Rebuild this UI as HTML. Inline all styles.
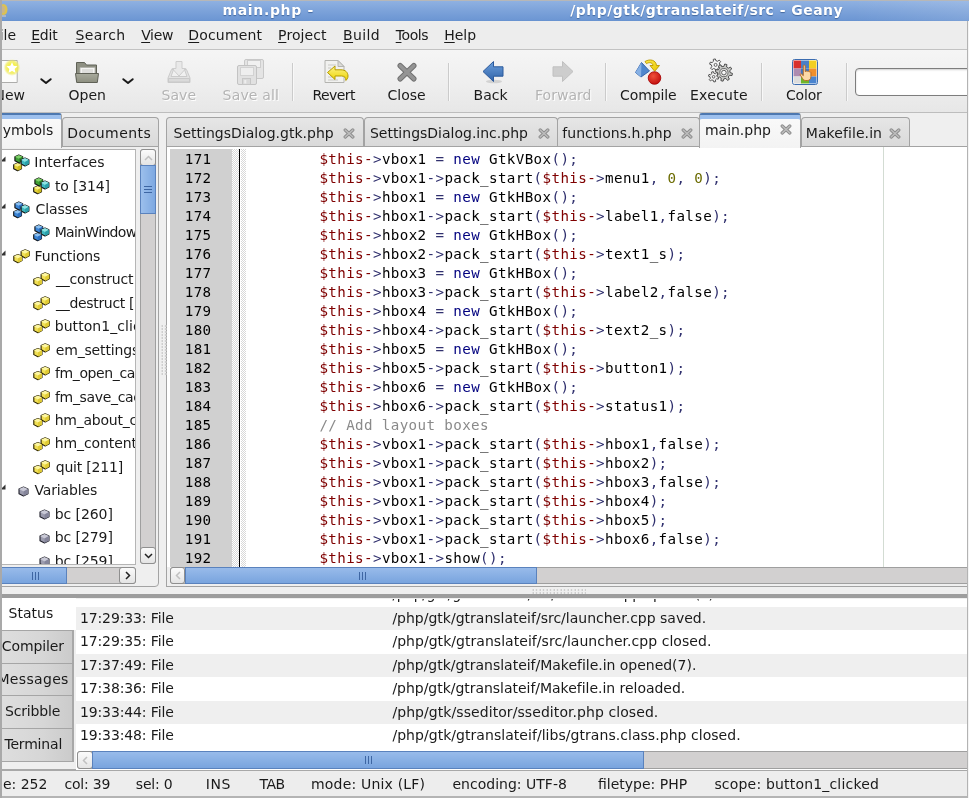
<!DOCTYPE html>
<html><head><meta charset="utf-8"><title>main.php - Geany</title>
<style>
html,body{margin:0;padding:0}
body>*{will-change:transform}
body{width:969px;height:798px;overflow:hidden;position:relative;background:#efefef;font-family:"DejaVu Sans","Liberation Sans",sans-serif;font-size:14px;color:#1a1a1a}
.abs{position:absolute}
div,span{box-sizing:border-box}
#title{left:0;top:0;width:969px;height:21.500px;background:linear-gradient(90deg,rgba(255,255,255,0) 88%,rgba(255,255,255,.12)),linear-gradient(#8fb1e1,#7da3da 45%,#6c96d3 92%,#4f7bba);color:#fff;font-weight:bold;font-size:14px;line-height:20px;white-space:nowrap;border-top:1.500px solid #b7b7b7;text-shadow:0 1px 1px #44699f}
#title span{position:absolute;top:-1.500px}
#menu{left:0;top:21px;width:969px;height:28px;background:#ededed;line-height:28px;white-space:nowrap}
#menu span{position:absolute;top:0}
#menu u{text-decoration:underline;text-underline-offset:2px}
#tb{left:0;top:49px;width:969px;height:64px;background:linear-gradient(#f5f5f5,#efefef 50%,#e7e7e7);border-top:1px solid #c2c2c2;border-bottom:1px solid #bdbdbd}
.tl{position:absolute;left:0;top:35.5px;line-height:18px;white-space:nowrap}
.tl span{position:absolute;top:0}
.dis{color:#b4b4b4;text-shadow:1px 1px 0 #fff}
.sep{position:absolute;top:13px;width:2px;height:38px;border-left:1px solid #cbcbcb;border-right:1px solid #f8f8f8}
.ic{position:absolute}
#entry{left:855px;top:18px;width:130px;height:28px;background:#fff;border:1.500px solid #7d7d7d;border-radius:4px;box-shadow:inset 0 1px 2px #d0d0d0}
.tab{position:absolute;top:117px;height:30px;background:linear-gradient(#e6e6e6,#d9d9d9);border:1px solid #a3a3a3;border-bottom:none;border-radius:4px 4px 0 0;white-space:nowrap;line-height:30px}
.tab.act{top:112.500px;height:34.500px;background:linear-gradient(#fafafa,#f3f3f3);border-top:2px solid #4d78b0;box-shadow:inset 0 4px 0 #9dc0ee;line-height:26px;z-index:3;border-radius:3px 3px 0 0}
.tab.act span{top:1.500px}
.tab span{position:absolute;top:0}
.cx{position:absolute;width:12px;height:11px}
#side{left:-3px;top:146px;width:162px;height:441px;border:1px solid #a3a3a3;border-radius:0 0 4px 0;background:#efefef}
#tree{left:2px;top:148.500px;width:134px;height:415.500px;background:#fff;overflow:hidden;border-right:1px solid #b5b5b5;border-bottom:1px solid #b5b5b5;border-top:1px solid #b0b0b0}
.tr{position:absolute;left:0;height:23.500px;line-height:23.500px;white-space:nowrap}
.tr svg,.tr span{position:absolute}
.tr span{top:0}
#ed{left:166px;top:146px;width:820px;height:441px;border:1px solid #a3a3a3;background:#efefef}
#edw{left:167px;top:147px;width:802px;height:420px;background:#fff;overflow:hidden}
#lnm{left:3px;top:2px;width:62px;height:420px;background:#d0d0d0}
#code,#lns{font-family:"DejaVu Sans Mono","Liberation Mono",monospace;font-size:14.200px;letter-spacing:.381px;line-height:19px;white-space:pre;position:absolute;top:2.700px;color:#000}
#lns{left:3px;width:41.500px;text-align:right;color:#000}
#code{left:81px}
.v{color:#7f0000}.o{color:#30306e}.k{color:#00007f}.n{color:#6b6b00}.c{color:#8a8a8a}
.fold{position:absolute;top:2px;height:420px;background-image:conic-gradient(#fff 25%,#d8d8d8 0 50%,#fff 0 75%,#d8d8d8 0);background-size:2px 2px}
.sb{position:absolute;background:#d2d0d0;border:1px solid #9f9f9f}
.thumb{position:absolute;background:linear-gradient(#98bbea,#79a4de);border:1px solid #5a82bd}
.thumbv{position:absolute;background:linear-gradient(90deg,#9cbfec,#7da8e1);border:1px solid #5a82bd}
.btn{position:absolute;background:linear-gradient(#fbfbfb,#e4e4e4);border:1px solid #8f8f8f;border-radius:3px}
#bot{left:-3px;top:594.300px;width:990px;height:176.700px;border-top:4px solid #9d9d9d;border-bottom:2px solid #a8a8a8;background:#efefef}
.bst{line-height:30px;white-space:nowrap}
.bst span{position:absolute;top:0}
.btab{position:absolute;left:0;width:74px;height:33.500px;background:linear-gradient(90deg,#dedede,#d6d6d6 60%,#cbcbcb);border:1px solid #a5a5a5;border-right:2px solid #a8a8a8;border-left:none;line-height:31px;white-space:nowrap}
.btab span{position:absolute;top:0}
.row{position:absolute;left:76px;width:893px;height:23.500px;line-height:23.500px;white-space:nowrap}
.row span{position:absolute;top:0}
.g{background:#efefef}
#stat{left:0;top:771px;width:969px;height:27px;background:#ededed;border-bottom:2px solid #b4b4b4;line-height:24px;white-space:nowrap}
#stat span{position:absolute;top:1px}
.grip{background-image:radial-gradient(circle at 1px 1px,#c4c4c4 .6px,rgba(255,255,255,.9) .9px,rgba(255,255,255,0) 1.500px);background-size:3.500px 3px}
</style></head><body>
<div id="title" class="abs"><svg class="abs" style="left:0;top:1px" width="10" height="16" viewBox="0 0 10 16"><ellipse cx="3.5" cy="7.5" rx="4" ry="5.5" fill="#dcc253"/><ellipse cx="2.8" cy="7.5" rx="2" ry="3.5" fill="#c9b58a"/><path d="M1 13h5v2h-5z" fill="#a9b7cc"/></svg><span style="left:222.50px;letter-spacing:0.655px">main.php -</span><span style="left:570.30px;letter-spacing:0.454px">/php/gtk/gtranslateif/src - Geany</span></div>
<div id="menu" class="abs"><span style="left:-7.41px"><u>F</u>ile</span><span style="left:31.20px;letter-spacing:-0.207px"><u>E</u>dit</span><span style="left:75.50px;letter-spacing:0.315px"><u>S</u>earch</span><span style="left:141.20px;letter-spacing:-0.357px"><u>V</u>iew</span><span style="left:188.20px;letter-spacing:0.194px"><u>D</u>ocument</span><span style="left:278.10px;letter-spacing:0.082px"><u>P</u>roject</span><span style="left:343.10px;letter-spacing:0.361px"><u>B</u>uild</span><span style="left:395.70px;letter-spacing:-0.398px"><u>T</u>ools</span><span style="left:444.20px;letter-spacing:-0.010px"><u>H</u>elp</span></div>
<div id="tb" class="abs">
<svg class="ic" style="left:-6px;top:5px" width="30" height="30" viewBox="0 0 30 30">
<defs><radialGradient id="gl"><stop offset="0.35" stop-color="#f4ef3a"/><stop offset="0.75" stop-color="#f1ec5a" stop-opacity=".75"/><stop offset="1" stop-color="#f4f080" stop-opacity="0"/></radialGradient></defs>
<path d="M3.5 5.5h19.700v22h-19.700z" fill="#fcfcfb" stroke="#adadab"/>
<circle cx="18" cy="12.5" r="8.5" fill="url(#gl)"/>
<path d="M18 7.2l1.7 3.5 3.8.5-2.8 2.7.7 3.8-3.4-1.8-3.4 1.8.7-3.8-2.8-2.7 3.8-.5z" fill="#fff"/>
</svg>
<svg class="ic" style="left:38.5px;top:25.599999999999994px" width="14" height="10" viewBox="0 0 14 10"><path d="M2.3 3.200l4.7 3.8 4.7-3.8" fill="none" stroke="#1a1a1a" stroke-width="2" stroke-linecap="round" stroke-linejoin="round"/></svg>
<svg class="ic" style="left:120.5px;top:25.599999999999994px" width="14" height="10" viewBox="0 0 14 10"><path d="M2.3 3.200l4.7 3.8 4.7-3.8" fill="none" stroke="#1a1a1a" stroke-width="2" stroke-linecap="round" stroke-linejoin="round"/></svg>
<svg class="ic" style="left:74px;top:9px" width="26" height="26" viewBox="0 0 26 26">
<defs><linearGradient id="fo" x1="0" y1="0" x2="0" y2="1"><stop offset="0" stop-color="#a9ab9d"/><stop offset="1" stop-color="#8d8f80"/></linearGradient></defs>
<path d="M2.5 3.5h8l2 2.5h10v15h-20z" fill="#8e9083" stroke="#5f6156" stroke-width="1"/>
<path d="M6 8.5h15v9h-15z" fill="#f4f4f2" stroke="#b0b0aa" stroke-width=".8"/>
<path d="M8 11h11M8 13h11M8 15h8" stroke="#c4c4c0" stroke-width=".9"/>
<path d="M1.5 14.5h23l-1.2 9h-20.6z" fill="url(#fo)" stroke="#5f6156" stroke-width="1" stroke-linejoin="round"/>
</svg>
<svg class="ic" style="left:166px;top:9px" width="26" height="26" viewBox="0 0 26 26">
<path d="M10 2.5h6v7h3.8l-6.8 7.5-6.8-7.500h3.8z" fill="#e9e9e9" stroke="#cdcdcd" stroke-linejoin="round"/>
<path d="M5.5 10.500l-3.5 8.500v4.500h22v-4.500l-3.5-8.500h-2l2.5 7h-16l2.5-7z" fill="#e3e3e3" stroke="#cbcbcb" stroke-linejoin="round"/>
<path d="M2.5 19.500h21v3.500h-21z" fill="#dadada" stroke="#c9c9c9"/>
</svg>
<svg class="ic" style="left:236px;top:7px" width="30" height="30" viewBox="0 0 30 30">
<g fill="#e4e4e4" stroke="#c8c8c8"><rect x="8.5" y="2.5" width="19" height="19" rx="1.5"/><rect x="11.5" y="3.5" width="13" height="7" fill="#f0f0f0" stroke="#cdcdcd"/></g>
<g fill="#e1e1e1" stroke="#c3c3c3"><rect x="1.5" y="8.5" width="19" height="19" rx="1.5"/><rect x="4.5" y="10.5" width="13" height="8" fill="#eeeeee" stroke="#d2d2d2"/><rect x="6.5" y="21.5" width="8" height="6" fill="#d9d9d9" stroke="#c6c6c6"/><rect x="8.3" y="23" width="2" height="3.5" fill="#eee" stroke="none"/></g>
</svg>
<svg class="ic" style="left:322px;top:8px" width="28" height="28" viewBox="0 0 28 28">
<defs><linearGradient id="ya" x1="0" y1="0" x2="0" y2="1"><stop offset="0" stop-color="#fdf38a"/><stop offset="1" stop-color="#edd400"/></linearGradient></defs>
<path d="M3 2.500h13l6 6v16h-19z" fill="#f1f1ef" stroke="#b4b4b0" stroke-linejoin="round"/>
<path d="M16 2.500v6h6z" fill="#dcdcd8" stroke="#b4b4b0" stroke-linejoin="round"/>
<path d="M6 7h8M6 10h3M6 19h5M6 22h10" stroke="#c9c9c5" stroke-width="1"/>
<path d="M5.5 14.500l7.5-6.500v3.800h6c4.5 0 7 2.7 7 6.2 0 2.2-1 3.6-2.2 4.5.3-2.8-1.3-4.5-4.3-4.500h-6.500v3.500z" fill="url(#ya)" stroke="#b59b00" stroke-width="1" stroke-linejoin="round"/>
</svg>
<svg class="ic" style="left:395px;top:11px" width="24" height="22" viewBox="0 0 24 22">
<path d="M5.2 4.700l13.6 13.100M18.8 4.700l-13.6 13.1" stroke="#6f6f6f" stroke-width="5.4" stroke-linecap="round"/>
<path d="M5.2 4.700l13.6 13.100M18.8 4.700l-13.6 13.1" stroke="#949494" stroke-width="3.6" stroke-linecap="round"/>
</svg>
<svg class="ic" style="left:481px;top:9px" width="24" height="26" viewBox="0 0 24 26">
<defs><linearGradient id="ba" x1="0" y1="0" x2="0" y2="1"><stop offset="0" stop-color="#6da0dc"/><stop offset="1" stop-color="#2f62a8"/></linearGradient></defs>
<ellipse cx="13" cy="22.5" rx="8" ry="1.8" fill="#000" opacity=".12"/>
<path d="M2 12.500l10.5-10v5.300h9.500v9.400h-9.500v5.300z" fill="url(#ba)" stroke="#2c5a9c" stroke-width="1" stroke-linejoin="round"/>
</svg>
<svg class="ic" style="left:551px;top:9px" width="24" height="26" viewBox="0 0 24 26">
<path d="M22 12.500l-10.5-10v5.300h-9.500v9.400h9.500v5.300z" fill="#cdcdcd" stroke="#c0c0c0" stroke-width="1" stroke-linejoin="round"/>
</svg>
<svg class="ic" style="left:633px;top:7px" width="30" height="30" viewBox="0 0 30 30">
<defs><radialGradient id="rb" cx=".4" cy=".35" r=".7"><stop offset="0" stop-color="#f0503a"/><stop offset="1" stop-color="#c00d0d"/></radialGradient>
<linearGradient id="yb" x1="0" y1="0" x2="1" y2="1"><stop offset="0" stop-color="#fce94f"/><stop offset="1" stop-color="#e9c800"/></linearGradient></defs>
<path d="M8.5 5.500l-6 10 5.5 4.5 8.5-6z" fill="#4f86cc" stroke="#2d5ea6" stroke-width=".9" stroke-linejoin="round"/>
<path d="M8.5 5.500l-.5 14.5-5.5-4.500z" fill="#86b0e4"/>
<path d="M12 4.500c5-3 11-1.5 11.5 4h3l-4.8 5.8-4.7-5.800h3c-.3-3-4-3.6-6.5-1.800z" fill="url(#yb)" stroke="#b99600" stroke-width=".9" stroke-linejoin="round"/>
<circle cx="21.5" cy="21" r="6.3" fill="url(#rb)" stroke="#a40000" stroke-width=".8"/>
</svg>
<svg class="ic" style="left:707px;top:8px" width="28" height="28" viewBox="0 0 28 28"><path d="M12.80 6.90L14.55 7.65L13.95 9.62L12.07 9.26L10.70 10.54L10.93 12.43L8.91 12.89L8.29 11.09L6.50 10.54L4.97 11.68L3.57 10.17L4.82 8.73L4.40 6.90L2.65 6.15L3.25 4.18L5.13 4.54L6.50 3.26L6.27 1.37L8.29 0.91L8.91 2.71L10.70 3.26L12.23 2.12L13.63 3.63L12.38 5.07Z" fill="#f4f4f4" stroke="#555" stroke-width="1" stroke-linejoin="round"/><circle cx="8.6" cy="6.9" r="1.5" fill="#f7f7f7" stroke="#555" stroke-width=".9"/><path d="M23.10 14.60L25.46 15.41L24.97 17.58L22.49 17.28L21.28 18.98L22.38 21.23L20.50 22.41L18.95 20.45L16.90 20.80L16.09 23.16L13.92 22.67L14.22 20.19L12.52 18.98L10.27 20.08L9.09 18.20L11.05 16.65L10.70 14.60L8.34 13.79L8.83 11.62L11.31 11.92L12.52 10.22L11.42 7.97L13.30 6.79L14.85 8.75L16.90 8.40L17.71 6.04L19.88 6.53L19.58 9.01L21.28 10.22L23.53 9.12L24.71 11.00L22.75 12.55Z" fill="#c9cac7" stroke="#4e4e4e" stroke-width="1" stroke-linejoin="round"/><circle cx="16.9" cy="14.6" r="4.1" fill="#e8e8e6" stroke="#4e4e4e" stroke-width=".8"/><circle cx="16.9" cy="14.6" r="2.3" fill="#f7f7f7" stroke="#4e4e4e" stroke-width=".9"/><path d="M10.20 18.80L11.76 19.45L11.23 21.16L9.58 20.82L8.40 21.92L8.62 23.59L6.87 23.99L6.34 22.39L4.80 21.92L3.46 22.94L2.24 21.63L3.36 20.37L3.00 18.80L1.44 18.15L1.97 16.44L3.62 16.78L4.80 15.68L4.58 14.01L6.33 13.61L6.86 15.21L8.40 15.68L9.74 14.66L10.96 15.97L9.84 17.23Z" fill="#f0f0f0" stroke="#555" stroke-width="1" stroke-linejoin="round"/><circle cx="6.6" cy="18.8" r="1.3" fill="#f7f7f7" stroke="#555" stroke-width=".9"/></svg>
<svg class="ic" style="left:792px;top:9px" width="26" height="26" viewBox="0 0 26 26">
<rect x=".5" y=".5" width="25" height="25" rx="2" fill="#fff" stroke="#3b6cb0"/>
<rect x="1.5" y="1.5" width="7.5" height="8" fill="#d9302c"/><rect x="9" y="1.5" width="8" height="8" fill="#4a7fc6"/><rect x="17" y="1.5" width="7.5" height="8" fill="#f2cf21"/>
<rect x="1.5" y="9.5" width="7.5" height="8" fill="#ad8bb0"/><rect x="9" y="9.5" width="8" height="8" fill="#3f77c0"/><rect x="17" y="9.5" width="7.5" height="8" fill="#f08f2b"/>
<rect x="1.5" y="17.5" width="7.5" height="7" fill="#dcdcdc"/><rect x="9" y="17.5" width="8" height="7" fill="#6fb52c"/><rect x="17" y="17.5" width="7.5" height="7" fill="#4a84cf"/>
<path d="M11.3 6.800c0-1 1.9-1 1.9 0v5.700l1-.2c.6-.5 1.3-.3 1.6.2.6-.4 1.3-.2 1.6.4.8-.3 1.5.2 1.5 1v3.600c0 2.6-1.3 4-3.6 4h-1.600c-1.5 0-2.2-.6-3-1.800l-2.4-3.600c-.5-.9.5-1.7 1.3-1l1.7 1.600z" fill="#fbd9a6" stroke="#b5651d" stroke-width=".9" stroke-linejoin="round"/>
</svg>
<div class="tl"><span style="left:-5.59px">New</span></div><div class="tl"><span style="left:68.50px;letter-spacing:-0.007px">Open</span></div><div class="tl dis"><span style="left:161.50px;letter-spacing:0.050px">Save</span></div><div class="tl dis"><span style="left:222.60px;letter-spacing:0.160px">Save all</span></div><div class="tl"><span style="left:312.50px;letter-spacing:-0.573px">Revert</span></div><div class="tl"><span style="left:387.50px;letter-spacing:-0.006px">Close</span></div><div class="tl"><span style="left:473.50px;letter-spacing:0.073px">Back</span></div><div class="tl dis"><span style="left:535.00px;letter-spacing:0.031px">Forward</span></div><div class="tl"><span style="left:620.00px;letter-spacing:-0.107px">Compile</span></div><div class="tl"><span style="left:690.00px;letter-spacing:0.271px">Execute</span></div><div class="tl"><span style="left:786.00px;letter-spacing:-0.199px">Color</span></div><div class="sep" style="left:291.5px"></div><div class="sep" style="left:448px"></div><div class="sep" style="left:605px"></div><div class="sep" style="left:761px"></div><div class="sep" style="left:846px"></div><div id="entry" class="abs"></div>
</div>
<div class="tab act" style="left:-6px;width:68px"><span style="left:-1.15px">Symbols</span></div><div class="tab" style="left:61.5px;width:96.5px"><span style="left:4.30px;letter-spacing:0.459px">Documents</span></div>
<div class="tab" style="left:166px;width:198px"><span style="left:6.60px">SettingsDialog.gtk.php</span><svg class="cx" style="left:176px;top:9.5px" viewBox="0 0 12 11"><path d="M2.2 2l7.6 7M9.8 2l-7.6 7" stroke="#8c8c8c" stroke-width="3.3" stroke-linecap="round"/><path d="M2.2 2l7.6 7M9.8 2l-7.6 7" stroke="#bdbdbd" stroke-width="1.5" stroke-linecap="round"/></svg></div><div class="tab" style="left:363.5px;width:193.5px"><span style="left:4.90px">SettingsDialog.inc.php</span><svg class="cx" style="left:172.5px;top:9.5px" viewBox="0 0 12 11"><path d="M2.2 2l7.6 7M9.8 2l-7.6 7" stroke="#8c8c8c" stroke-width="3.3" stroke-linecap="round"/><path d="M2.2 2l7.6 7M9.8 2l-7.6 7" stroke="#bdbdbd" stroke-width="1.5" stroke-linecap="round"/></svg></div><div class="tab" style="left:556.5px;width:143px"><span style="left:4.30px;letter-spacing:0.027px">functions.h.php</span><svg class="cx" style="left:122.5px;top:9.5px" viewBox="0 0 12 11"><path d="M2.2 2l7.6 7M9.8 2l-7.6 7" stroke="#8c8c8c" stroke-width="3.3" stroke-linecap="round"/><path d="M2.2 2l7.6 7M9.8 2l-7.6 7" stroke="#bdbdbd" stroke-width="1.5" stroke-linecap="round"/></svg></div><div class="tab act" style="left:699px;width:102px"><span style="left:5.00px;letter-spacing:-0.027px">main.php</span><svg class="cx" style="left:80px;top:9px" viewBox="0 0 12 11"><path d="M2.2 2l7.6 7M9.8 2l-7.6 7" stroke="#8c8c8c" stroke-width="3.3" stroke-linecap="round"/><path d="M2.2 2l7.6 7M9.8 2l-7.6 7" stroke="#bdbdbd" stroke-width="1.5" stroke-linecap="round"/></svg></div><div class="tab" style="left:800.5px;width:108.5px"><span style="left:3.80px;letter-spacing:0.076px">Makefile.in</span><svg class="cx" style="left:87.0px;top:9.5px" viewBox="0 0 12 11"><path d="M2.2 2l7.6 7M9.8 2l-7.6 7" stroke="#8c8c8c" stroke-width="3.3" stroke-linecap="round"/><path d="M2.2 2l7.6 7M9.8 2l-7.6 7" stroke="#bdbdbd" stroke-width="1.5" stroke-linecap="round"/></svg></div>
<div id="side" class="abs"></div>
<div id="tree" class="abs">
<div class="tr" style="top:1.10px"><svg style="left:-2.500px;top:5px" width="6" height="6" viewBox="0 0 6 6"><path d="M5.5 .5v5h-5z" fill="#333"/></svg><svg style="left:10.7px;top:2.800px" width="17" height="18" viewBox="0 0 17 18"><path d="M5.80 0.90L9.70 2.65L9.70 6.73L5.80 8.70L1.90 6.73L1.90 2.65Z" fill="#3f9f35" stroke="#111" stroke-width="1.1" stroke-linejoin="round"/><path d="M5.80 0.90L9.70 2.65L5.80 4.80L1.90 2.65Z" fill="#7fd06a"/><path d="M5.80 4.80L9.70 2.65L9.70 6.73L5.80 8.70Z" fill="#2f8a2a"/><path d="M12.00 4.10L15.90 5.86L15.90 9.93L12.00 11.90L8.10 9.93L8.10 5.86Z" fill="#3fb8c0" stroke="#111" stroke-width="1.1" stroke-linejoin="round"/><path d="M12.00 4.10L15.90 5.86L12.00 8.00L8.10 5.86Z" fill="#8fe3e3"/><path d="M12.00 8.00L15.90 5.86L15.90 9.93L12.00 11.90Z" fill="#2aa0aa"/><path d="M4.60 8.90L8.50 10.66L8.50 14.73L4.60 16.70L0.70 14.73L0.70 10.66Z" fill="#e3d23a" stroke="#111" stroke-width="1.1" stroke-linejoin="round"/><path d="M4.60 8.90L8.50 10.66L4.60 12.80L0.70 10.66Z" fill="#fbf08a"/><path d="M4.60 12.80L8.50 10.66L8.50 14.73L4.60 16.70Z" fill="#cdbb20"/></svg><span style="left:32.30px;letter-spacing:0.025px">Interfaces</span></div>
<div class="tr" style="top:24.54px"><svg style="left:30.700000000000003px;top:2.800px" width="17" height="18" viewBox="0 0 17 18"><path d="M5.80 0.90L9.70 2.65L9.70 6.73L5.80 8.70L1.90 6.73L1.90 2.65Z" fill="#3f9f35" stroke="#111" stroke-width="1.1" stroke-linejoin="round"/><path d="M5.80 0.90L9.70 2.65L5.80 4.80L1.90 2.65Z" fill="#7fd06a"/><path d="M5.80 4.80L9.70 2.65L9.70 6.73L5.80 8.70Z" fill="#2f8a2a"/><path d="M12.00 4.10L15.90 5.86L15.90 9.93L12.00 11.90L8.10 9.93L8.10 5.86Z" fill="#3fb8c0" stroke="#111" stroke-width="1.1" stroke-linejoin="round"/><path d="M12.00 4.10L15.90 5.86L12.00 8.00L8.10 5.86Z" fill="#8fe3e3"/><path d="M12.00 8.00L15.90 5.86L15.90 9.93L12.00 11.90Z" fill="#2aa0aa"/><path d="M4.60 8.90L8.50 10.66L8.50 14.73L4.60 16.70L0.70 14.73L0.70 10.66Z" fill="#e3d23a" stroke="#111" stroke-width="1.1" stroke-linejoin="round"/><path d="M4.60 8.90L8.50 10.66L4.60 12.80L0.70 10.66Z" fill="#fbf08a"/><path d="M4.60 12.80L8.50 10.66L8.50 14.73L4.60 16.70Z" fill="#cdbb20"/></svg><span style="left:53.00px;letter-spacing:-0.170px">to [314]</span></div>
<div class="tr" style="top:47.98px"><svg style="left:-2.500px;top:5px" width="6" height="6" viewBox="0 0 6 6"><path d="M5.5 .5v5h-5z" fill="#333"/></svg><svg style="left:10.7px;top:2.800px" width="17" height="18" viewBox="0 0 17 18"><path d="M5.80 0.90L9.70 2.65L9.70 6.73L5.80 8.70L1.90 6.73L1.90 2.65Z" fill="#3d86d6" stroke="#111" stroke-width="1.1" stroke-linejoin="round"/><path d="M5.80 0.90L9.70 2.65L5.80 4.80L1.90 2.65Z" fill="#8cc0f0"/><path d="M5.80 4.80L9.70 2.65L9.70 6.73L5.80 8.70Z" fill="#2a6fc0"/><path d="M12.00 4.10L15.90 5.86L15.90 9.93L12.00 11.90L8.10 9.93L8.10 5.86Z" fill="#3fb8c0" stroke="#111" stroke-width="1.1" stroke-linejoin="round"/><path d="M12.00 4.10L15.90 5.86L12.00 8.00L8.10 5.86Z" fill="#8fe3e3"/><path d="M12.00 8.00L15.90 5.86L15.90 9.93L12.00 11.90Z" fill="#2aa0aa"/><path d="M4.60 8.90L8.50 10.66L8.50 14.73L4.60 16.70L0.70 14.73L0.70 10.66Z" fill="#3d86d6" stroke="#111" stroke-width="1.1" stroke-linejoin="round"/><path d="M4.60 8.90L8.50 10.66L4.60 12.80L0.70 10.66Z" fill="#8cc0f0"/><path d="M4.60 12.80L8.50 10.66L8.50 14.73L4.60 16.70Z" fill="#2a6fc0"/></svg><span style="left:33.60px;letter-spacing:-0.108px">Classes</span></div>
<div class="tr" style="top:71.42px"><svg style="left:30.700000000000003px;top:2.800px" width="17" height="18" viewBox="0 0 17 18"><path d="M5.80 0.90L9.70 2.65L9.70 6.73L5.80 8.70L1.90 6.73L1.90 2.65Z" fill="#3d86d6" stroke="#111" stroke-width="1.1" stroke-linejoin="round"/><path d="M5.80 0.90L9.70 2.65L5.80 4.80L1.90 2.65Z" fill="#8cc0f0"/><path d="M5.80 4.80L9.70 2.65L9.70 6.73L5.80 8.70Z" fill="#2a6fc0"/><path d="M12.00 4.10L15.90 5.86L15.90 9.93L12.00 11.90L8.10 9.93L8.10 5.86Z" fill="#3fb8c0" stroke="#111" stroke-width="1.1" stroke-linejoin="round"/><path d="M12.00 4.10L15.90 5.86L12.00 8.00L8.10 5.86Z" fill="#8fe3e3"/><path d="M12.00 8.00L15.90 5.86L15.90 9.93L12.00 11.90Z" fill="#2aa0aa"/><path d="M4.60 8.90L8.50 10.66L8.50 14.73L4.60 16.70L0.70 14.73L0.70 10.66Z" fill="#3d86d6" stroke="#111" stroke-width="1.1" stroke-linejoin="round"/><path d="M4.60 8.90L8.50 10.66L4.60 12.80L0.70 10.66Z" fill="#8cc0f0"/><path d="M4.60 12.80L8.50 10.66L8.50 14.73L4.60 16.70Z" fill="#2a6fc0"/></svg><span style="left:52.70px;letter-spacing:-0.688px">MainWindow [4]</span></div>
<div class="tr" style="top:94.86px"><svg style="left:-2.500px;top:5px" width="6" height="6" viewBox="0 0 6 6"><path d="M5.5 .5v5h-5z" fill="#333"/></svg><svg style="left:10.7px;top:4.200px" width="17" height="15" viewBox="0 0 17 15"><path d="M12.20 0.70L16.30 2.54L16.30 6.83L12.20 8.90L8.10 6.83L8.10 2.54Z" fill="#f0df55" stroke="#2a2300" stroke-width="1.1" stroke-linejoin="round"/><path d="M12.20 0.70L16.30 2.54L12.20 4.80L8.10 2.54Z" fill="#fdf6a0"/><path d="M12.20 4.80L16.30 2.54L16.30 6.83L12.20 8.90Z" fill="#e0cb35"/><path d="M4.90 5.50L9.00 7.34L9.00 11.63L4.90 13.70L0.80 11.63L0.80 7.34Z" fill="#f0df55" stroke="#2a2300" stroke-width="1.1" stroke-linejoin="round"/><path d="M4.90 5.50L9.00 7.34L4.90 9.60L0.80 7.34Z" fill="#fdf6a0"/><path d="M4.90 9.60L9.00 7.34L9.00 11.63L4.90 13.70Z" fill="#e0cb35"/></svg><span style="left:32.60px;letter-spacing:-0.131px">Functions</span></div>
<div class="tr" style="top:118.30px"><svg style="left:30.700000000000003px;top:4.200px" width="17" height="15" viewBox="0 0 17 15"><path d="M12.20 0.70L16.30 2.54L16.30 6.83L12.20 8.90L8.10 6.83L8.10 2.54Z" fill="#f0df55" stroke="#2a2300" stroke-width="1.1" stroke-linejoin="round"/><path d="M12.20 0.70L16.30 2.54L12.20 4.80L8.10 2.54Z" fill="#fdf6a0"/><path d="M12.20 4.80L16.30 2.54L16.30 6.83L12.20 8.90Z" fill="#e0cb35"/><path d="M4.90 5.50L9.00 7.34L9.00 11.63L4.90 13.70L0.80 11.63L0.80 7.34Z" fill="#f0df55" stroke="#2a2300" stroke-width="1.1" stroke-linejoin="round"/><path d="M4.90 5.50L9.00 7.34L4.90 9.60L0.80 7.34Z" fill="#fdf6a0"/><path d="M4.90 9.60L9.00 7.34L9.00 11.63L4.90 13.70Z" fill="#e0cb35"/></svg><span style="left:54.00px;letter-spacing:-0.225px">__construct [10]</span></div>
<div class="tr" style="top:141.74px"><svg style="left:30.700000000000003px;top:4.200px" width="17" height="15" viewBox="0 0 17 15"><path d="M12.20 0.70L16.30 2.54L16.30 6.83L12.20 8.90L8.10 6.83L8.10 2.54Z" fill="#f0df55" stroke="#2a2300" stroke-width="1.1" stroke-linejoin="round"/><path d="M12.20 0.70L16.30 2.54L12.20 4.80L8.10 2.54Z" fill="#fdf6a0"/><path d="M12.20 4.80L16.30 2.54L16.30 6.83L12.20 8.90Z" fill="#e0cb35"/><path d="M4.90 5.50L9.00 7.34L9.00 11.63L4.90 13.70L0.80 11.63L0.80 7.34Z" fill="#f0df55" stroke="#2a2300" stroke-width="1.1" stroke-linejoin="round"/><path d="M4.90 5.50L9.00 7.34L4.90 9.60L0.80 7.34Z" fill="#fdf6a0"/><path d="M4.90 9.60L9.00 7.34L9.00 11.63L4.90 13.70Z" fill="#e0cb35"/></svg><span style="left:54.00px;letter-spacing:-0.312px">__destruct [130]</span></div>
<div class="tr" style="top:165.18px"><svg style="left:30.700000000000003px;top:4.200px" width="17" height="15" viewBox="0 0 17 15"><path d="M12.20 0.70L16.30 2.54L16.30 6.83L12.20 8.90L8.10 6.83L8.10 2.54Z" fill="#f0df55" stroke="#2a2300" stroke-width="1.1" stroke-linejoin="round"/><path d="M12.20 0.70L16.30 2.54L12.20 4.80L8.10 2.54Z" fill="#fdf6a0"/><path d="M12.20 4.80L16.30 2.54L16.30 6.83L12.20 8.90Z" fill="#e0cb35"/><path d="M4.90 5.50L9.00 7.34L9.00 11.63L4.90 13.70L0.80 11.63L0.80 7.34Z" fill="#f0df55" stroke="#2a2300" stroke-width="1.1" stroke-linejoin="round"/><path d="M4.90 5.50L9.00 7.34L4.90 9.60L0.80 7.34Z" fill="#fdf6a0"/><path d="M4.90 9.60L9.00 7.34L9.00 11.63L4.90 13.70Z" fill="#e0cb35"/></svg><span style="left:52.70px;letter-spacing:0.063px">button1_clicked [240]</span></div>
<div class="tr" style="top:188.62px"><svg style="left:30.700000000000003px;top:4.200px" width="17" height="15" viewBox="0 0 17 15"><path d="M12.20 0.70L16.30 2.54L16.30 6.83L12.20 8.90L8.10 6.83L8.10 2.54Z" fill="#f0df55" stroke="#2a2300" stroke-width="1.1" stroke-linejoin="round"/><path d="M12.20 0.70L16.30 2.54L12.20 4.80L8.10 2.54Z" fill="#fdf6a0"/><path d="M12.20 4.80L16.30 2.54L16.30 6.83L12.20 8.90Z" fill="#e0cb35"/><path d="M4.90 5.50L9.00 7.34L9.00 11.63L4.90 13.70L0.80 11.63L0.80 7.34Z" fill="#f0df55" stroke="#2a2300" stroke-width="1.1" stroke-linejoin="round"/><path d="M4.90 5.50L9.00 7.34L4.90 9.60L0.80 7.34Z" fill="#fdf6a0"/><path d="M4.90 9.60L9.00 7.34L9.00 11.63L4.90 13.70Z" fill="#e0cb35"/></svg><span style="left:53.70px;letter-spacing:-0.155px">em_settings_clicked [190]</span></div>
<div class="tr" style="top:212.06px"><svg style="left:30.700000000000003px;top:4.200px" width="17" height="15" viewBox="0 0 17 15"><path d="M12.20 0.70L16.30 2.54L16.30 6.83L12.20 8.90L8.10 6.83L8.10 2.54Z" fill="#f0df55" stroke="#2a2300" stroke-width="1.1" stroke-linejoin="round"/><path d="M12.20 0.70L16.30 2.54L12.20 4.80L8.10 2.54Z" fill="#fdf6a0"/><path d="M12.20 4.80L16.30 2.54L16.30 6.83L12.20 8.90Z" fill="#e0cb35"/><path d="M4.90 5.50L9.00 7.34L9.00 11.63L4.90 13.70L0.80 11.63L0.80 7.34Z" fill="#f0df55" stroke="#2a2300" stroke-width="1.1" stroke-linejoin="round"/><path d="M4.90 5.50L9.00 7.34L4.90 9.60L0.80 7.34Z" fill="#fdf6a0"/><path d="M4.90 9.60L9.00 7.34L9.00 11.63L4.90 13.70Z" fill="#e0cb35"/></svg><span style="left:53.00px;letter-spacing:-0.386px">fm_open_cache_clicked [160]</span></div>
<div class="tr" style="top:235.50px"><svg style="left:30.700000000000003px;top:4.200px" width="17" height="15" viewBox="0 0 17 15"><path d="M12.20 0.70L16.30 2.54L16.30 6.83L12.20 8.90L8.10 6.83L8.10 2.54Z" fill="#f0df55" stroke="#2a2300" stroke-width="1.1" stroke-linejoin="round"/><path d="M12.20 0.70L16.30 2.54L12.20 4.80L8.10 2.54Z" fill="#fdf6a0"/><path d="M12.20 4.80L16.30 2.54L16.30 6.83L12.20 8.90Z" fill="#e0cb35"/><path d="M4.90 5.50L9.00 7.34L9.00 11.63L4.90 13.70L0.80 11.63L0.80 7.34Z" fill="#f0df55" stroke="#2a2300" stroke-width="1.1" stroke-linejoin="round"/><path d="M4.90 5.50L9.00 7.34L4.90 9.60L0.80 7.34Z" fill="#fdf6a0"/><path d="M4.90 9.60L9.00 7.34L9.00 11.63L4.90 13.70Z" fill="#e0cb35"/></svg><span style="left:53.00px;letter-spacing:-0.337px">fm_save_cache_clicked [175]</span></div>
<div class="tr" style="top:258.94px"><svg style="left:30.700000000000003px;top:4.200px" width="17" height="15" viewBox="0 0 17 15"><path d="M12.20 0.70L16.30 2.54L16.30 6.83L12.20 8.90L8.10 6.83L8.10 2.54Z" fill="#f0df55" stroke="#2a2300" stroke-width="1.1" stroke-linejoin="round"/><path d="M12.20 0.70L16.30 2.54L12.20 4.80L8.10 2.54Z" fill="#fdf6a0"/><path d="M12.20 4.80L16.30 2.54L16.30 6.83L12.20 8.90Z" fill="#e0cb35"/><path d="M4.90 5.50L9.00 7.34L9.00 11.63L4.90 13.70L0.80 11.63L0.80 7.34Z" fill="#f0df55" stroke="#2a2300" stroke-width="1.1" stroke-linejoin="round"/><path d="M4.90 5.50L9.00 7.34L4.90 9.60L0.80 7.34Z" fill="#fdf6a0"/><path d="M4.90 9.60L9.00 7.34L9.00 11.63L4.90 13.70Z" fill="#e0cb35"/></svg><span style="left:52.70px;letter-spacing:-0.226px">hm_about_clicked [200]</span></div>
<div class="tr" style="top:282.38px"><svg style="left:30.700000000000003px;top:4.200px" width="17" height="15" viewBox="0 0 17 15"><path d="M12.20 0.70L16.30 2.54L16.30 6.83L12.20 8.90L8.10 6.83L8.10 2.54Z" fill="#f0df55" stroke="#2a2300" stroke-width="1.1" stroke-linejoin="round"/><path d="M12.20 0.70L16.30 2.54L12.20 4.80L8.10 2.54Z" fill="#fdf6a0"/><path d="M12.20 4.80L16.30 2.54L16.30 6.83L12.20 8.90Z" fill="#e0cb35"/><path d="M4.90 5.50L9.00 7.34L9.00 11.63L4.90 13.70L0.80 11.63L0.80 7.34Z" fill="#f0df55" stroke="#2a2300" stroke-width="1.1" stroke-linejoin="round"/><path d="M4.90 5.50L9.00 7.34L4.90 9.60L0.80 7.34Z" fill="#fdf6a0"/><path d="M4.90 9.60L9.00 7.34L9.00 11.63L4.90 13.70Z" fill="#e0cb35"/></svg><span style="left:52.70px;letter-spacing:-0.081px">hm_contents_clicked [205]</span></div>
<div class="tr" style="top:305.82px"><svg style="left:30.700000000000003px;top:4.200px" width="17" height="15" viewBox="0 0 17 15"><path d="M12.20 0.70L16.30 2.54L16.30 6.83L12.20 8.90L8.10 6.83L8.10 2.54Z" fill="#f0df55" stroke="#2a2300" stroke-width="1.1" stroke-linejoin="round"/><path d="M12.20 0.70L16.30 2.54L12.20 4.80L8.10 2.54Z" fill="#fdf6a0"/><path d="M12.20 4.80L16.30 2.54L16.30 6.83L12.20 8.90Z" fill="#e0cb35"/><path d="M4.90 5.50L9.00 7.34L9.00 11.63L4.90 13.70L0.80 11.63L0.80 7.34Z" fill="#f0df55" stroke="#2a2300" stroke-width="1.1" stroke-linejoin="round"/><path d="M4.90 5.50L9.00 7.34L4.90 9.60L0.80 7.34Z" fill="#fdf6a0"/><path d="M4.90 9.60L9.00 7.34L9.00 11.63L4.90 13.70Z" fill="#e0cb35"/></svg><span style="left:53.70px;letter-spacing:-0.197px">quit [211]</span></div>
<div class="tr" style="top:329.26px"><svg style="left:-2.500px;top:5px" width="6" height="6" viewBox="0 0 6 6"><path d="M5.5 .5v5h-5z" fill="#333"/></svg><svg style="left:15.9px;top:6.500px" width="11" height="11" viewBox="0 0 11 11"><path d="M5.50 1.00L10.00 3.02L10.00 7.73L5.50 10.00L1.00 7.73L1.00 3.02Z" fill="#9c9cae" stroke="#22222c" stroke-width="1.1" stroke-linejoin="round"/><path d="M5.50 1.00L10.00 3.02L5.50 5.50L1.00 3.02Z" fill="#c9c9d6"/><path d="M5.50 5.50L10.00 3.02L10.00 7.73L5.50 10.00Z" fill="#85859a"/></svg><span style="left:32.40px;letter-spacing:-0.135px">Variables</span></div>
<div class="tr" style="top:352.70px"><svg style="left:37.4px;top:6.500px" width="11" height="11" viewBox="0 0 11 11"><path d="M5.50 1.00L10.00 3.02L10.00 7.73L5.50 10.00L1.00 7.73L1.00 3.02Z" fill="#9c9cae" stroke="#22222c" stroke-width="1.1" stroke-linejoin="round"/><path d="M5.50 1.00L10.00 3.02L5.50 5.50L1.00 3.02Z" fill="#c9c9d6"/><path d="M5.50 5.50L10.00 3.02L10.00 7.73L5.50 10.00Z" fill="#85859a"/></svg><span style="left:52.70px;letter-spacing:-0.074px">bc [260]</span></div>
<div class="tr" style="top:376.14px"><svg style="left:37.4px;top:6.500px" width="11" height="11" viewBox="0 0 11 11"><path d="M5.50 1.00L10.00 3.02L10.00 7.73L5.50 10.00L1.00 7.73L1.00 3.02Z" fill="#9c9cae" stroke="#22222c" stroke-width="1.1" stroke-linejoin="round"/><path d="M5.50 1.00L10.00 3.02L5.50 5.50L1.00 3.02Z" fill="#c9c9d6"/><path d="M5.50 5.50L10.00 3.02L10.00 7.73L5.50 10.00Z" fill="#85859a"/></svg><span style="left:52.70px;letter-spacing:-0.074px">bc [279]</span></div>
<div class="tr" style="top:399.58px"><svg style="left:37.4px;top:6.500px" width="11" height="11" viewBox="0 0 11 11"><path d="M5.50 1.00L10.00 3.02L10.00 7.73L5.50 10.00L1.00 7.73L1.00 3.02Z" fill="#9c9cae" stroke="#22222c" stroke-width="1.1" stroke-linejoin="round"/><path d="M5.50 1.00L10.00 3.02L5.50 5.50L1.00 3.02Z" fill="#c9c9d6"/><path d="M5.50 5.50L10.00 3.02L10.00 7.73L5.50 10.00Z" fill="#85859a"/></svg><span style="left:52.70px;letter-spacing:-0.074px">bc [259]</span></div>
</div>
<div class="sb" style="left:140px;top:149px;width:16px;height:415px;border-radius:3px"></div><div class="btn" style="left:140px;top:149px;width:16px;height:17px"><svg class="abs" style="left:3px;top:4.500px" width="9" height="6" viewBox="0 0 9 6"><path d="M1 5l3.5-3.5 3.5 3.5" fill="none" stroke="#c0c0c0" stroke-width="1.5"/></svg></div><div class="thumbv" style="left:140px;top:165px;width:16px;height:49px"><svg class="abs" style="left:3px;top:19px" width="8" height="9" viewBox="0 0 8 9"><path d="M0 1.500h8M0 4.500h8M0 7.500h8" stroke="#3e66a3" stroke-width="1"/></svg></div><div class="btn" style="left:140px;top:547px;width:16px;height:17px"><svg class="abs" style="left:3px;top:5px" width="9" height="6" viewBox="0 0 9 6"><path d="M1 1l3.5 3.5 3.5-3.5" fill="none" stroke="#222" stroke-width="1.5"/></svg></div>
<div class="sb" style="left:-3px;top:567px;width:139px;height:17px;border-radius:3px"></div><div class="thumb" style="left:-3px;top:567px;width:70px;height:17px"><svg class="abs" style="left:33px;top:3.500px" width="9" height="8" viewBox="0 0 9 8"><path d="M1.5 0v8M4.5 0v8M7.5 0v8" stroke="#3e66a3" stroke-width="1"/></svg></div><div class="btn" style="left:119px;top:567px;width:17px;height:17px"><svg class="abs" style="left:5px;top:3px" width="6" height="9" viewBox="0 0 6 9"><path d="M1 1l3.5 3.5-3.5 3.5" fill="none" stroke="#222" stroke-width="1.5"/></svg></div>
<div id="ed" class="abs"></div>
<div id="edw" class="abs">
<div id="lnm" class="abs"></div><div class="fold" style="left:65px;width:7px"></div><div class="abs" style="left:71.7px;top:2px;width:1.600px;height:420px;background:#000"></div><div class="fold" style="left:73.5px;width:5.500px"></div><div class="abs" style="left:715.5px;top:0;width:1px;height:420px;background:#d3dcd3"></div>
<div id="lns">171
172
173
174
175
176
177
178
179
180
181
182
183
184
185
186
187
188
189
190
191
192</div>
<div id="code">        <span class="v">$this-</span><span class="o">&gt;</span>vbox1 <span class="o">=</span> <span class="k">new</span> GtkVBox<span class="o">(</span><span class="o">)</span><span class="o">;</span>
        <span class="v">$this-</span><span class="o">&gt;</span>vbox1<span class="o">-</span><span class="o">&gt;</span>pack_start<span class="o">(</span><span class="v">$this-</span><span class="o">&gt;</span>menu1<span class="o">,</span> <span class="n">0</span><span class="o">,</span> <span class="n">0</span><span class="o">)</span><span class="o">;</span>
        <span class="v">$this-</span><span class="o">&gt;</span>hbox1 <span class="o">=</span> <span class="k">new</span> GtkHBox<span class="o">(</span><span class="o">)</span><span class="o">;</span>
        <span class="v">$this-</span><span class="o">&gt;</span>hbox1<span class="o">-</span><span class="o">&gt;</span>pack_start<span class="o">(</span><span class="v">$this-</span><span class="o">&gt;</span>label1<span class="o">,</span>false<span class="o">)</span><span class="o">;</span>
        <span class="v">$this-</span><span class="o">&gt;</span>hbox2 <span class="o">=</span> <span class="k">new</span> GtkHBox<span class="o">(</span><span class="o">)</span><span class="o">;</span>
        <span class="v">$this-</span><span class="o">&gt;</span>hbox2<span class="o">-</span><span class="o">&gt;</span>pack_start<span class="o">(</span><span class="v">$this-</span><span class="o">&gt;</span>text1_s<span class="o">)</span><span class="o">;</span>
        <span class="v">$this-</span><span class="o">&gt;</span>hbox3 <span class="o">=</span> <span class="k">new</span> GtkHBox<span class="o">(</span><span class="o">)</span><span class="o">;</span>
        <span class="v">$this-</span><span class="o">&gt;</span>hbox3<span class="o">-</span><span class="o">&gt;</span>pack_start<span class="o">(</span><span class="v">$this-</span><span class="o">&gt;</span>label2<span class="o">,</span>false<span class="o">)</span><span class="o">;</span>
        <span class="v">$this-</span><span class="o">&gt;</span>hbox4 <span class="o">=</span> <span class="k">new</span> GtkHBox<span class="o">(</span><span class="o">)</span><span class="o">;</span>
        <span class="v">$this-</span><span class="o">&gt;</span>hbox4<span class="o">-</span><span class="o">&gt;</span>pack_start<span class="o">(</span><span class="v">$this-</span><span class="o">&gt;</span>text2_s<span class="o">)</span><span class="o">;</span>
        <span class="v">$this-</span><span class="o">&gt;</span>hbox5 <span class="o">=</span> <span class="k">new</span> GtkHBox<span class="o">(</span><span class="o">)</span><span class="o">;</span>
        <span class="v">$this-</span><span class="o">&gt;</span>hbox5<span class="o">-</span><span class="o">&gt;</span>pack_start<span class="o">(</span><span class="v">$this-</span><span class="o">&gt;</span>button1<span class="o">)</span><span class="o">;</span>
        <span class="v">$this-</span><span class="o">&gt;</span>hbox6 <span class="o">=</span> <span class="k">new</span> GtkHBox<span class="o">(</span><span class="o">)</span><span class="o">;</span>
        <span class="v">$this-</span><span class="o">&gt;</span>hbox6<span class="o">-</span><span class="o">&gt;</span>pack_start<span class="o">(</span><span class="v">$this-</span><span class="o">&gt;</span>status1<span class="o">)</span><span class="o">;</span>
        <span class="c">// Add layout boxes</span>
        <span class="v">$this-</span><span class="o">&gt;</span>vbox1<span class="o">-</span><span class="o">&gt;</span>pack_start<span class="o">(</span><span class="v">$this-</span><span class="o">&gt;</span>hbox1<span class="o">,</span>false<span class="o">)</span><span class="o">;</span>
        <span class="v">$this-</span><span class="o">&gt;</span>vbox1<span class="o">-</span><span class="o">&gt;</span>pack_start<span class="o">(</span><span class="v">$this-</span><span class="o">&gt;</span>hbox2<span class="o">)</span><span class="o">;</span>
        <span class="v">$this-</span><span class="o">&gt;</span>vbox1<span class="o">-</span><span class="o">&gt;</span>pack_start<span class="o">(</span><span class="v">$this-</span><span class="o">&gt;</span>hbox3<span class="o">,</span>false<span class="o">)</span><span class="o">;</span>
        <span class="v">$this-</span><span class="o">&gt;</span>vbox1<span class="o">-</span><span class="o">&gt;</span>pack_start<span class="o">(</span><span class="v">$this-</span><span class="o">&gt;</span>hbox4<span class="o">)</span><span class="o">;</span>
        <span class="v">$this-</span><span class="o">&gt;</span>vbox1<span class="o">-</span><span class="o">&gt;</span>pack_start<span class="o">(</span><span class="v">$this-</span><span class="o">&gt;</span>hbox5<span class="o">)</span><span class="o">;</span>
        <span class="v">$this-</span><span class="o">&gt;</span>vbox1<span class="o">-</span><span class="o">&gt;</span>pack_start<span class="o">(</span><span class="v">$this-</span><span class="o">&gt;</span>hbox6<span class="o">,</span>false<span class="o">)</span><span class="o">;</span>
        <span class="v">$this-</span><span class="o">&gt;</span>vbox1<span class="o">-</span><span class="o">&gt;</span>show<span class="o">(</span><span class="o">)</span><span class="o">;</span></div>
</div>
<div class="sb" style="left:170px;top:567px;width:810px;height:17px;border-radius:3px"></div><div class="btn" style="left:170px;top:567px;width:15px;height:17px"><svg class="abs" style="left:4px;top:3px" width="6" height="9" viewBox="0 0 6 9"><path d="M5 1l-3.5 3.5 3.5 3.5" fill="none" stroke="#c0c0c0" stroke-width="1.5"/></svg></div><div class="thumb" style="left:184.5px;top:567px;width:352px;height:17px"><svg class="abs" style="left:172px;top:3.500px" width="9" height="8" viewBox="0 0 9 8"><path d="M1.5 0v8M4.5 0v8M7.5 0v8" stroke="#3e66a3" stroke-width="1"/></svg></div>
<div class="abs grip" style="left:160.5px;top:325px;width:5.500px;height:50px"></div><div class="abs grip" style="left:531.5px;top:588.5px;width:54px;height:5.500px"></div>
<div id="bot" class="abs"></div>
<div class="abs bst" style="left:0;top:598px;width:75.500px;height:32px;background:#fff"><span style="left:8.60px;letter-spacing:0.017px">Status</span></div>
<div class="btab" style="top:630.0px"><span style="left:1.80px;letter-spacing:-0.108px">Compiler</span></div><div class="btab" style="top:662.5px"><span style="left:-2.62px;letter-spacing:0.337px">Messages</span></div><div class="btab" style="top:695.0px"><span style="left:5.00px;letter-spacing:-0.156px">Scribble</span></div><div class="btab" style="top:727.5px"><span style="left:4.40px;letter-spacing:-0.182px">Terminal</span></div>
<div class="abs" style="left:75.5px;top:598.5px;width:893.500px;height:171px;background:#fff;overflow:hidden">
<div class="row" style="left:0;top:-15.799999999999955px"><span style="left:3.90px;letter-spacing:-0.112px">17:29:28: File</span><span style="left:316.40px;letter-spacing:-0.392px">/php/gtk/gtranslateif/src/launcher.cpp opened(6).</span></div>
<div class="row g" style="left:0;top:7.7000000000000455px"><span style="left:3.90px;letter-spacing:-0.112px">17:29:33: File</span><span style="left:316.40px">/php/gtk/gtranslateif/src/launcher.cpp saved.</span></div>
<div class="row" style="left:0;top:31.200000000000045px"><span style="left:3.90px;letter-spacing:-0.112px">17:29:35: File</span><span style="left:316.40px;letter-spacing:0.042px">/php/gtk/gtranslateif/src/launcher.cpp closed.</span></div>
<div class="row g" style="left:0;top:54.700000000000045px"><span style="left:3.90px;letter-spacing:-0.112px">17:37:49: File</span><span style="left:316.40px;letter-spacing:-0.021px">/php/gtk/gtranslateif/Makefile.in opened(7).</span></div>
<div class="row" style="left:0;top:78.20000000000005px"><span style="left:3.90px;letter-spacing:-0.112px">17:38:36: File</span><span style="left:316.40px;letter-spacing:-0.029px">/php/gtk/gtranslateif/Makefile.in reloaded.</span></div>
<div class="row g" style="left:0;top:101.70000000000005px"><span style="left:3.90px;letter-spacing:-0.112px">19:33:44: File</span><span style="left:316.40px;letter-spacing:0.073px">/php/gtk/sseditor/sseditor.php closed.</span></div>
<div class="row" style="left:0;top:125.20000000000005px"><span style="left:3.90px;letter-spacing:-0.112px">19:33:48: File</span><span style="left:316.40px;letter-spacing:0.046px">/php/gtk/gtranslateif/libs/gtrans.class.php closed.</span></div>
</div>
<div class="sb" style="left:76.500px;top:751px;width:900px;height:17.500px;border-radius:3px"></div><div class="btn" style="left:76.500px;top:751px;width:15.500px;height:17.500px"><svg class="abs" style="left:4px;top:3.500px" width="6" height="9" viewBox="0 0 6 9"><path d="M5 1l-3.5 3.5 3.5 3.5" fill="none" stroke="#c0c0c0" stroke-width="1.5"/></svg></div><div class="thumb" style="left:91.500px;top:751px;width:552px;height:17.500px"><svg class="abs" style="left:271px;top:4px" width="9" height="8" viewBox="0 0 9 8"><path d="M1.5 0v8M4.5 0v8M7.5 0v8" stroke="#3e66a3" stroke-width="1"/></svg></div>
<div id="stat" class="abs"><span style="left:-13.73px">line: 252</span><span style="left:64.40px;letter-spacing:-0.204px">col: 39</span><span style="left:135.80px;letter-spacing:-0.213px">sel: 0</span><span style="left:205.80px;letter-spacing:0.499px">INS</span><span style="left:259.50px;letter-spacing:-0.521px">TAB</span><span style="left:311.00px;letter-spacing:0.184px">mode: Unix (LF)</span><span style="left:452.50px;letter-spacing:0.010px">encoding: UTF-8</span><span style="left:598.00px">filetype: PHP</span><span style="left:714.40px;letter-spacing:0.186px">scope: button1_clicked</span></div>
<div class="abs" style="left:0;top:0;width:1.500px;height:798px;background:#a9a9a9;z-index:9"></div><div class="abs" style="left:966.5px;top:21px;width:1.500px;height:777px;background:#b3b3b3;z-index:9"></div><div class="abs" style="left:968px;top:21px;width:1px;height:777px;background:#f4f4f4;z-index:9"></div>
</body></html>
